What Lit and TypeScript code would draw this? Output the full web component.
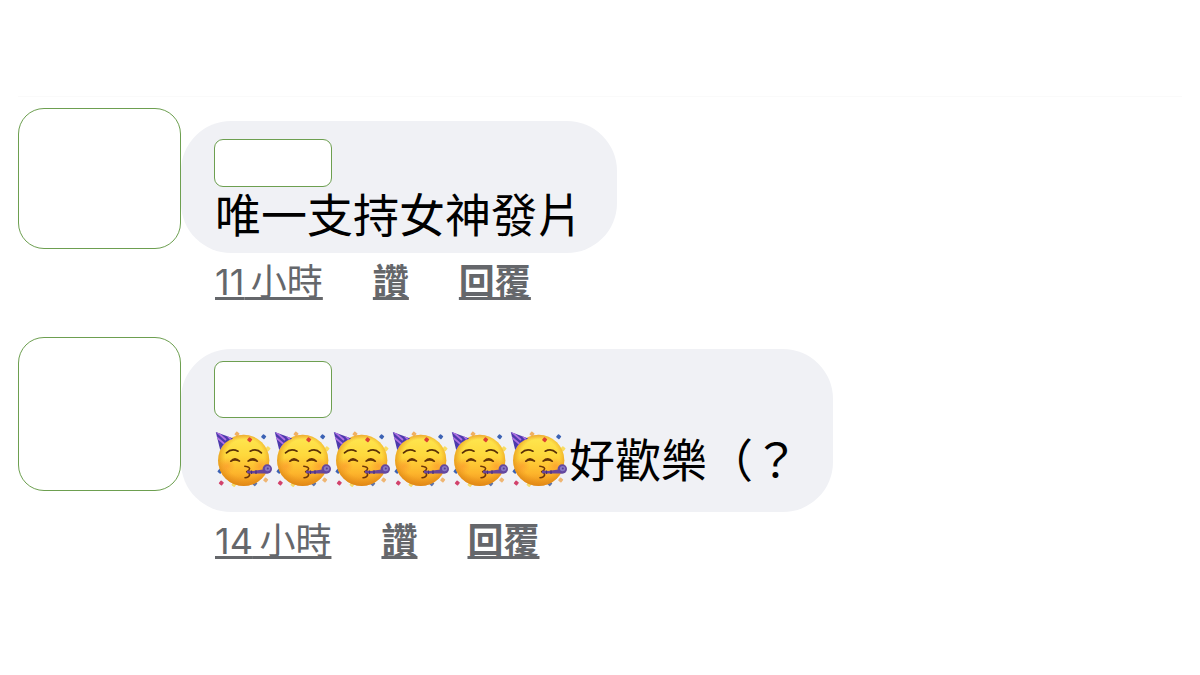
import { LitElement, html, svg, css, nothing } from "lit";
import { customElement, property } from "lit/decorators.js";
import { classMap } from "lit/directives/class-map.js";

interface Comment {
  text: string;
  emojis: number;
  hours: number;
  tall: boolean;
}

const COMMENTS: Comment[] = [
  { text: "唯一支持女神發片", emojis: 0, hours: 11, tall: false },
  { text: "好歡樂（？", emojis: 6, hours: 14, tall: true },
];

const CONFETTI: Array<[number, number, string]> = [
  [22, 4, "#f0b062"],
  [48.7, 6.7, "#3c62b4"],
  [53, 18.7, "#f8dc62"],
  [5, 41.3, "#3c62b4"],
  [6.3, 53, "#d2426c"],
  [19, 54.5, "#f5dc6c"],
  [39.7, 53.6, "#5d72a8"],
  [50.7, 50, "#efb673"],
];

@customElement("party-face")
export class PartyFace extends LitElement {
  static styles = css`
    :host {
      display: block;
      width: 59px;
      height: 59px;
    }
    .face {
      display: block;
      width: 100%;
      height: 100%;
    }
  `;

  private bit([x, y, fill]: [number, number, string]) {
    return svg`<rect x=${x - 2} y=${y - 2} width="4" height="4" rx="0.8"
      fill=${fill} transform="rotate(40 ${x} ${y})"></rect>`;
  }

  render() {
    return html`
      <svg class="face" viewBox="0 0 59 59" role="img" aria-label="🥳">
        <defs>
          <linearGradient id="skin" x1="0" y1="0" x2="0" y2="1">
            <stop offset="0" stop-color="#f5c043"></stop>
            <stop offset="0.1" stop-color="#fee44c"></stop>
            <stop offset="0.4" stop-color="#fed83c"></stop>
            <stop offset="0.75" stop-color="#fdb52c"></stop>
            <stop offset="1" stop-color="#ea8f1a"></stop>
          </linearGradient>
          <radialGradient id="rim" cx="0.52" cy="0.46" r="0.54">
            <stop offset="0.7" stop-color="#e8921c" stop-opacity="0"></stop>
            <stop offset="1" stop-color="#dd8514" stop-opacity="0.75"></stop>
          </radialGradient>
          <radialGradient id="blush">
            <stop offset="0" stop-color="#fb8a2c" stop-opacity="0.5"></stop>
            <stop offset="1" stop-color="#fb8a2c" stop-opacity="0"></stop>
          </radialGradient>
          <clipPath id="hat"><path d="M.8 2 18.3 8.5Q9.5 11 5.2 20Z"></path></clipPath>
        </defs>
        ${CONFETTI.map((c) => this.bit(c))}
        <circle cx="28.7" cy="30.4" r="25.6" fill="url(#skin)"></circle>
        <circle cx="28.7" cy="30.4" r="25.6" fill="url(#rim)"></circle>
        <circle cx="12" cy="36" r="8" fill="url(#blush)"></circle>
        <circle cx="45.5" cy="36" r="8" fill="url(#blush)"></circle>
        <g clip-path="url(#hat)">
          <rect width="20" height="21" fill="#4c3aac"></rect>
          <path d="M2 2 11 10M-1 5 13 17M9 2 18 12" fill="none" stroke="#b070e2" stroke-width="1.8"></path>
        </g>
        ${this.bit([34.7, 9.7, "#dc4232"])}
        <g fill="none" stroke-linecap="round" stroke-linejoin="round">
          <path d="M11.5 22.8Q16.5 18 23 21.2M35.2 21.2Q41.5 18 46.4 22.8" stroke="#593006" stroke-width="1.7"></path>
          <path d="M15.8 31.2Q19.8 26.4 24.4 31M33.2 31Q38 26.4 42.3 31.2Q38 28.6 33.2 31M15.8 31.2Q19.8 28.6 24.4 31" stroke="#633307" stroke-width="1.7"></path>
          <path d="M29.8 36.3Q34.4 36.8 34.6 38.6 34.4 40.6 31.6 41.8 34.8 43 34.6 45 34 47.4 30 47.8" stroke="#6b3508" stroke-width="1.5"></path>
        </g>
        <path d="M32 40.6 38 41 50 39.2 52 43.4 38 43.6 32 43.3Z" fill="#6a4699"></path>
        <path d="M36.5 40.5v3.6M41 40.3v3.6" stroke="#47307f" stroke-width="1.2"></path>
        <circle cx="52.3" cy="39" r="4.7" fill="#64479f"></circle>
        <circle cx="52.6" cy="38.6" r="2.7" fill="#8878c4"></circle>
        <circle cx="52.8" cy="38.4" r="1" fill="#56408f"></circle>
      </svg>
    `;
  }
}

@customElement("comment-item")
export class CommentItem extends LitElement {
  @property({ attribute: false }) comment!: Comment;

  static styles = css`
    :host {
      display: block;
    }
    .comment {
      display: flex;
      align-items: flex-start;
    }
    .avatar {
      flex: none;
      box-sizing: border-box;
      width: 163px;
      height: 141px;
      border: 1px solid #6d9f50;
      border-radius: 26px;
      background: #fff;
    }
    .body {
      display: flex;
      flex-direction: column;
      align-items: flex-start;
      min-width: 0;
      padding-top: 13px;
    }
    .bubble {
      box-sizing: border-box;
      padding: 18px 33px 10px;
      border-radius: 50px;
      background: #f0f1f5;
    }
    .name {
      box-sizing: border-box;
      width: 118px;
      height: 48px;
      border: 1px solid #6d9f50;
      border-radius: 9px;
      background: #fff;
    }
    .text {
      display: flex;
      flex-wrap: wrap;
      align-items: center;
      margin: 0;
      padding: 0 1px;
      color: #000;
      font-size: 46px;
      line-height: 56px;
    }
    .meta {
      display: flex;
      gap: 50px;
      padding: 4px 34px 0;
      font-size: 36px;
      line-height: 50px;
    }
    .time,
    .action {
      padding: 0;
      border: 0;
      background: none;
      color: #65676b;
      font: inherit;
      text-decoration: underline;
      text-decoration-thickness: 3px;
      text-underline-offset: 2px;
      text-decoration-skip-ink: none;
      cursor: pointer;
    }
    .action {
      font-weight: 700;
    }
    .tall .avatar {
      height: 154px;
    }
    .tall .body {
      padding-top: 12px;
    }
    .tall .bubble {
      padding: 12px 33px 23px;
    }
    .tall .name {
      height: 57px;
      margin-bottom: 12px;
    }
  `;

  render() {
    const { text, emojis, hours, tall } = this.comment;
    return html`
      <article class=${classMap({ comment: true, tall })}>
        <div class="avatar"></div>
        <div class="body">
          <div class="bubble">
            <div class="name"></div>
            <p class="text">
              ${emojis
                ? Array.from({ length: emojis }, () => html`<party-face></party-face>`)
                : nothing}<span>${text}</span>
            </p>
          </div>
          <div class="meta">
            <a class="time" href="#">${hours}&thinsp;小時</a>
            <button class="action" type="button">讚</button>
            <button class="action" type="button">回覆</button>
          </div>
        </div>
      </article>
    `;
  }
}

@customElement("app-root")
export class AppRoot extends LitElement {
  static styles = css`
    :host {
      display: block;
      box-sizing: border-box;
      min-height: 100vh;
      padding: 96px 18px 0;
      background: #fff;
      font-family: Inter, "Noto Sans CJK TC", sans-serif;
    }
    .thread {
      display: flex;
      flex-direction: column;
      gap: 30px;
      padding-top: 11px;
      border-top: 1px solid #fafafa;
    }
  `;

  render() {
    return html`
      <main class="thread">
        ${COMMENTS.map((c) => html`<comment-item .comment=${c}></comment-item>`)}
      </main>
    `;
  }
}
